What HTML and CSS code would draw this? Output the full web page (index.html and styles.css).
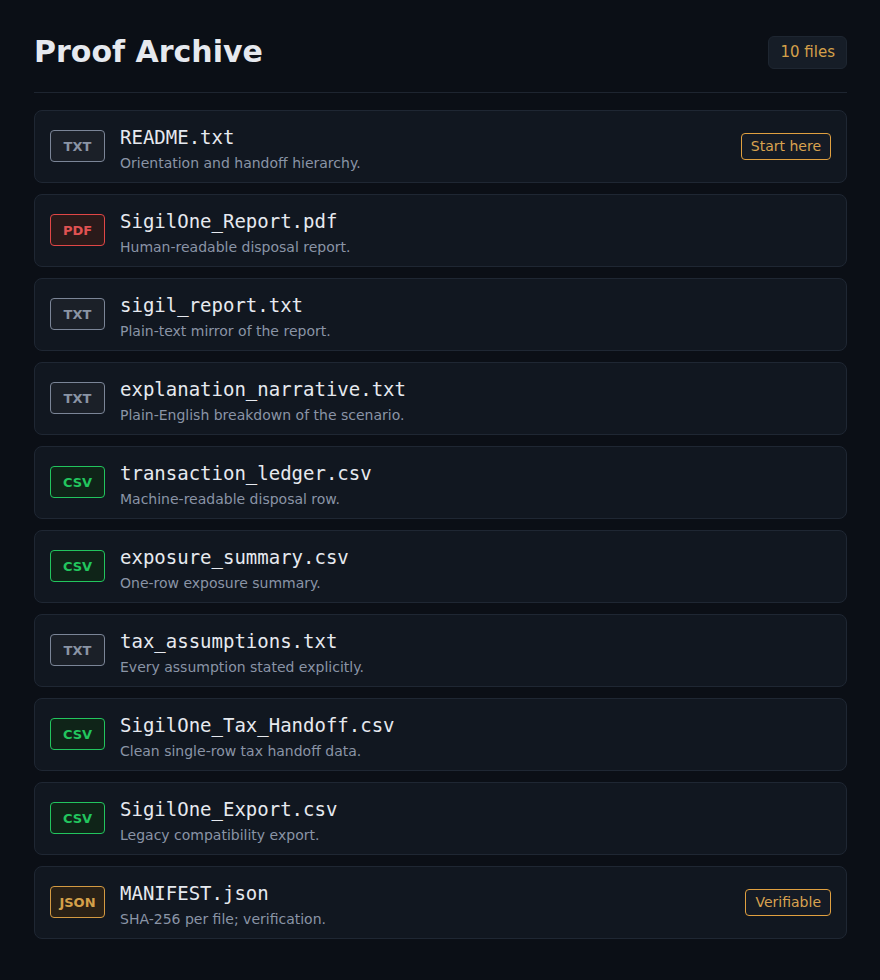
FILE: index.html
```html
<!DOCTYPE html>
<html lang="en">
<head>
  <meta charset="UTF-8">
  <title>Proof Archive</title>
  <link rel="stylesheet" href="styles.css">
</head>
<body>

  <div class="archive">
    <div class="archive-header">
      <h1>Proof Archive</h1>
      <span class="file-count">10 files</span>
    </div>

    <ul class="file-list">
      <li class="file-card">
        <span class="file-type type-txt">TXT</span>
        <div class="file-info">
          <div class="file-name">README.txt</div>
          <div class="file-desc">Orientation and handoff hierarchy.</div>
        </div>
        <span class="file-tag">Start here</span>
      </li>
      <li class="file-card">
        <span class="file-type type-pdf">PDF</span>
        <div class="file-info">
          <div class="file-name">SigilOne_Report.pdf</div>
          <div class="file-desc">Human-readable disposal report.</div>
        </div>
      </li>
      <li class="file-card">
        <span class="file-type type-txt">TXT</span>
        <div class="file-info">
          <div class="file-name">sigil_report.txt</div>
          <div class="file-desc">Plain-text mirror of the report.</div>
        </div>
      </li>
      <li class="file-card">
        <span class="file-type type-txt">TXT</span>
        <div class="file-info">
          <div class="file-name">explanation_narrative.txt</div>
          <div class="file-desc">Plain-English breakdown of the scenario.</div>
        </div>
      </li>
      <li class="file-card">
        <span class="file-type type-csv">CSV</span>
        <div class="file-info">
          <div class="file-name">transaction_ledger.csv</div>
          <div class="file-desc">Machine-readable disposal row.</div>
        </div>
      </li>
      <li class="file-card">
        <span class="file-type type-csv">CSV</span>
        <div class="file-info">
          <div class="file-name">exposure_summary.csv</div>
          <div class="file-desc">One-row exposure summary.</div>
        </div>
      </li>
      <li class="file-card">
        <span class="file-type type-txt">TXT</span>
        <div class="file-info">
          <div class="file-name">tax_assumptions.txt</div>
          <div class="file-desc">Every assumption stated explicitly.</div>
        </div>
      </li>
      <li class="file-card">
        <span class="file-type type-csv">CSV</span>
        <div class="file-info">
          <div class="file-name">SigilOne_Tax_Handoff.csv</div>
          <div class="file-desc">Clean single-row tax handoff data.</div>
        </div>
      </li>
      <li class="file-card">
        <span class="file-type type-csv">CSV</span>
        <div class="file-info">
          <div class="file-name">SigilOne_Export.csv</div>
          <div class="file-desc">Legacy compatibility export.</div>
        </div>
      </li>
      <li class="file-card">
        <span class="file-type type-json">JSON</span>
        <div class="file-info">
          <div class="file-name">MANIFEST.json</div>
          <div class="file-desc">SHA-256 per file; verification.</div>
        </div>
        <span class="file-tag">Verifiable</span>
      </li>
    </ul>
  </div>

</body>
</html>
```

FILE: styles.css
```css
body {
  font-family: "DejaVu Sans", sans-serif;
  background-color: #0b0f16;
  color: #e6e9ef;
  margin: 0;
}

.archive {
  padding: 0 33px 30px 34px;
}

.archive-header {
  display: flex;
  justify-content: space-between;
  align-items: center;
  padding: 33px 0 21px;
  border-bottom: 1px solid #1e2530;
}

.archive-header h1 {
  margin: 0;
  font-size: 30px;
  line-height: 38px;
  font-weight: bold;
  color: #e6e9ef;
}

.file-count {
  background-color: #161d27;
  border: 1px solid #1e2631;
  border-radius: 6px;
  padding: 6px 11px;
  font-size: 15px;
  line-height: 19px;
  color: #d4a04a;
}

.file-list {
  list-style: none;
  margin: 17px 0 0;
  padding: 0;
  display: flex;
  flex-direction: column;
  gap: 11px;
}

/* badge and tag sit by margin, text block sets the card height */
.file-card {
  display: flex;
  align-items: flex-start;
  gap: 15px;
  background-color: #111720;
  border: 1px solid #1f2733;
  border-radius: 8px;
  padding: 14px 15px 9px;
}

.file-type {
  flex: none;
  width: 53px;
  height: 30px;
  margin-top: 5px;
  display: flex;
  align-items: center;
  justify-content: center;
  border: 1px solid;
  border-radius: 4px;
  font-size: 13px;
  font-weight: bold;
}

.type-txt {
  border-color: #7b8597;
  background-color: #1b2028;
  color: #8a94a4;
}

.type-pdf {
  border-color: #e04646;
  background-color: #2a1a1a;
  color: #e05252;
}

.type-csv {
  border-color: #22c55e;
  background-color: #0f2418;
  color: #22c55e;
}

.type-json {
  border-color: #d49a42;
  background-color: #2a2116;
  color: #d4a04a;
}

.file-info {
  flex: 1;
  display: flex;
  flex-direction: column;
  gap: 5px;
}

.file-name {
  font-family: "DejaVu Sans Mono", monospace;
  font-size: 19px;
  line-height: 24px;
  color: #e6e9ef;
}

.file-desc {
  font-size: 14px;
  line-height: 19px;
  color: #8a94a6;
}

.file-tag {
  margin-top: 8px;
  border: 1px solid #e0a040;
  border-radius: 4px;
  background-color: #151b25;
  padding: 4px 9px;
  font-size: 14px;
  line-height: 17px;
  color: #d9a24f;
}
```
